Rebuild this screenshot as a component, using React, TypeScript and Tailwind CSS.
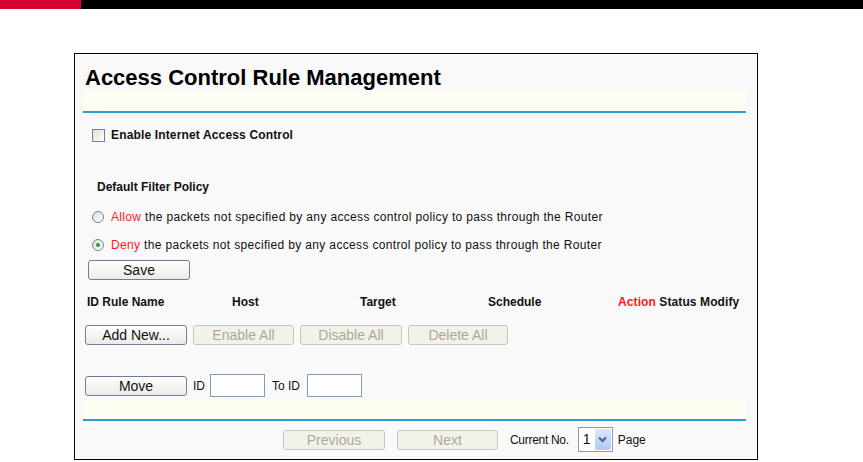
import React from "react";

const font = { fontFamily: '"Liberation Sans", Arial, sans-serif' };

const Btn = ({
  children,
  disabled = false,
  w = "w-[102px]",
}: {
  children: React.ReactNode;
  disabled?: boolean;
  w?: string;
}) => (
  <button
    disabled={disabled}
    className={
      disabled
        ? `${w} h-[20px] rounded-[3px] border border-[#c9c7ba] bg-[#f3f2ea] text-[14px] leading-[18px] text-[#aca899]`
        : `${w} h-[20px] rounded-[3px] border border-[#6f7f99] bg-gradient-to-b from-white to-[#ebebe6] text-[14px] leading-[18px] text-[#111]`
    }
  >
    {children}
  </button>
);

const Band = () => (
  <div className="ml-[8px] mr-[11px] h-[21px] bg-[#fdfdf2] border-b-2 border-[#2b9dd2]" />
);

const Radio = ({ checked = false }: { checked?: boolean }) => (
  <span className="flex h-[12px] w-[12px] items-center justify-center rounded-full border border-[#6f83a0] bg-gradient-to-br from-[#dcdcd6] to-white">
    {checked && <span className="h-[4px] w-[4px] rounded-full bg-[#22a322]" />}
  </span>
);

export default function App() {
  return (
    <div className="h-[462px] w-[863px] bg-white text-[12px] text-[#111]" style={font}>
      {/* top bar */}
      <div className="flex h-[9px]">
        <div className="w-[81px] bg-[#d50032]" />
        <div className="flex-1 bg-black" />
      </div>

      <div className="ml-[74px] mt-[44px] w-[684px] border border-black bg-[#f9f9f9] pb-[7px]">
        <div className="mt-[11px] h-[26px] pl-[10px] text-[22px] font-bold leading-[26px] text-black">
          Access Control Rule Management
        </div>
        <div className="mt-[1px]">
          <Band />
        </div>

        {/* enable */}
        <div className="mt-[12px] flex h-[20px] items-center gap-[6px] pl-[17px]">
          <span className="h-[13px] w-[13px] border border-[#71819c] bg-gradient-to-br from-[#dedcd4] to-white" />
          <span className="font-bold tracking-[0.15px]">Enable Internet Access Control</span>
        </div>

        <div className="mt-[32px] flex h-[20px] items-center pl-[22px] font-bold">
          Default Filter Policy
        </div>

        <div className="mt-[6px] flex h-[28px] items-center gap-[7px] pl-[17px]">
          <Radio />
          <span className="tracking-[0.34px]">
            <span className="text-[#ff1a1a]">Allow</span> the packets not specified by any access control policy to pass through the Router
          </span>
        </div>
        <div className="flex h-[28px] items-center gap-[7px] pl-[17px]">
          <Radio checked />
          <span className="tracking-[0.34px]">
            <span className="text-[#ff1a1a]">Deny</span> the packets not specified by any access control policy to pass through the Router
          </span>
        </div>

        <div className="mt-[1px] pl-[13px]">
          <Btn>Save</Btn>
        </div>

        {/* table header */}
        <div className="mt-[12px] flex h-[20px] items-center pl-[12px] font-bold">
          <span className="w-[145px]">ID Rule Name</span>
          <span className="w-[128px]">Host</span>
          <span className="w-[128px]">Target</span>
          <span className="w-[130px]">Schedule</span>
          <span className="tracking-[0.1px]">
            <span className="text-[#ff1a1a]">Action</span> Status Modify
          </span>
        </div>

        <div className="mt-[13px] flex gap-[6px] pl-[10px]">
          <Btn>Add New...</Btn>
          <Btn disabled w="w-[101px]">Enable All</Btn>
          <Btn disabled>Disable All</Btn>
          <Btn disabled w="w-[100px]">Delete All</Btn>
        </div>

        <div className="mt-[29px] flex h-[23px] items-center pl-[10px]">
          <Btn>Move</Btn>
          <span className="ml-[6px]">ID</span>
          <span className="ml-[5px] h-[23px] w-[55px] border border-[#7f9db9] bg-white" />
          <span className="ml-[7px]">To ID</span>
          <span className="ml-[7px] h-[23px] w-[55px] border border-[#7f9db9] bg-white" />
        </div>

        <div className="mt-[3px]">
          <Band />
        </div>

        {/* paging */}
        <div className="mt-[6px] flex h-[25px] items-center pl-[208px]">
          <Btn disabled>Previous</Btn>
          <span className="ml-[12px]">
            <Btn disabled w="w-[101px]">Next</Btn>
          </span>
          <span className="ml-[12px] tracking-[-0.3px]">Current No.</span>
          <span className="ml-[9px] flex h-[25px] w-[35px] items-center border border-[#7f9db9] bg-white">
            <span className="flex-1 pl-[4px] text-[14px]">1</span>
            <span className="mr-[1px] flex h-[21px] w-[16px] items-center justify-center rounded-[2px] bg-gradient-to-b from-[#dbe6fd] to-[#b4c8f6]">
              <svg width="9" height="7" viewBox="0 0 9 7">
                <path d="M1 1.5 L4.5 5 L8 1.5" fill="none" stroke="#4d6185" strokeWidth="2" />
              </svg>
            </span>
          </span>
          <span className="ml-[5px]">Page</span>
        </div>
      </div>
    </div>
  );
}
